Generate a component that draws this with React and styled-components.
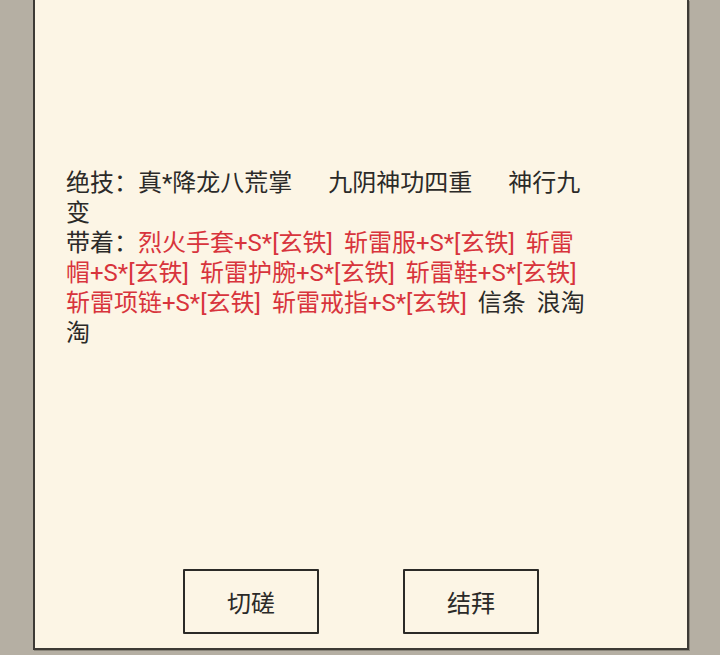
import styled, { createGlobalStyle } from 'styled-components';

const GlobalStyle = createGlobalStyle`
    html, body {
        margin: 0;
        padding: 0;
        background-color: #b5afa3;
    }
    body {
        font-family: Roboto, "Noto Sans CJK SC", sans-serif;
    }
`;

const Screen = styled.div`
    width: 720px;
    height: 655px;
    box-sizing: border-box;
    padding: 0 31px 5px 33px;
    display: flex;
    background-color: #b5afa3;
`;

const Sheet = styled.div`
    flex: 1;
    display: flex;
    flex-direction: column;
    box-sizing: border-box;
    background-color: #fcf5e5;
    border: 2px solid #3d3a35;
    border-top: none;
    box-shadow: 1px 1px 0 rgba(60, 56, 50, 0.35);
    padding: 168px 0 14px 31px;
`;

const Info = styled.div`
    width: 523px;
    font-size: 24px;
    line-height: 30px;
    word-spacing: 5px;
    color: #2b2a28;
`;

const Line = styled.div`
    margin: 0;
`;

const Skill = styled.span`
    margin-left: ${(props) => (props.first ? '0' : '36px')};
`;

const Item = styled.span`
    color: ${(props) => (props.red ? '#d8343c' : '#2b2a28')};
`;

const Btns = styled.div`
    margin-top: auto;
    margin-right: 31px;
    display: flex;
    justify-content: center;
    gap: 84px;
`;

const Button = styled.button`
    width: 136px;
    height: 65px;
    box-sizing: border-box;
    border: 2px solid #2b2a27;
    border-radius: 1px;
    background-color: transparent;
    font-family: Roboto, "Noto Sans CJK SC", sans-serif;
    font-size: 24px;
    color: #2b2a28;
    cursor: pointer;
`;

const skills = ['真*降龙八荒掌', '九阴神功四重', '神行九变'];

const gear = [
    { name: '烈火手套+S*[玄铁]', red: true },
    { name: '斩雷服+S*[玄铁]', red: true },
    { name: '斩雷帽+S*[玄铁]', red: true },
    { name: '斩雷护腕+S*[玄铁]', red: true },
    { name: '斩雷鞋+S*[玄铁]', red: true },
    { name: '斩雷项链+S*[玄铁]', red: true },
    { name: '斩雷戒指+S*[玄铁]', red: true },
    { name: '信条', red: false },
    { name: '浪淘淘', red: false },
];

const App = () => {
    return (
        <>
            <GlobalStyle />
            <Screen>
                <Sheet>
                    <Info>
                        <Line>
                            绝技：
                            {skills.map((s, i) => (
                                <Skill key={s} first={i === 0}>
                                    {s}
                                </Skill>
                            ))}
                        </Line>
                        <Line>
                            带着：
                            {gear.map((g, i) => (
                                <Item key={g.name} red={g.red}>
                                    {i > 0 ? ' ' : ''}
                                    {g.name}
                                </Item>
                            ))}
                        </Line>
                    </Info>
                    <Btns>
                        <Button>切磋</Button>
                        <Button>结拜</Button>
                    </Btns>
                </Sheet>
            </Screen>
        </>
    );
};

export default App;
